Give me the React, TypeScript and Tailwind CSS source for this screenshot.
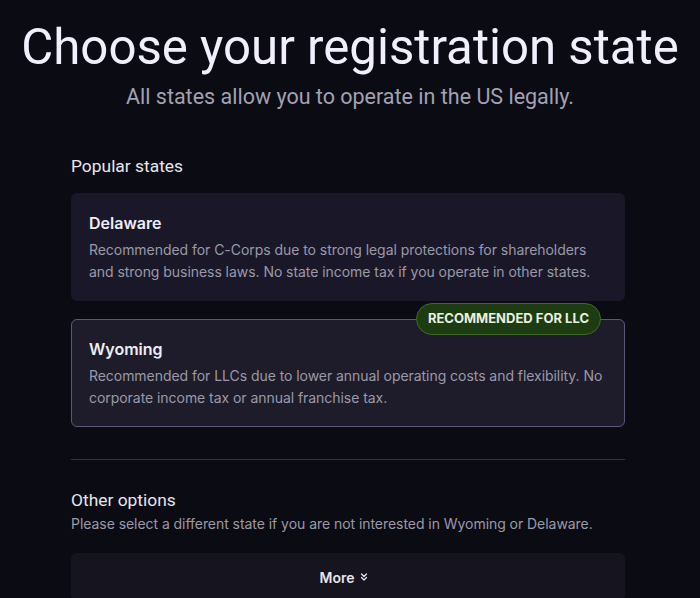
import React from "react";
import { ChevronsDown } from "lucide-react";

export default function App() {
  return (
    <div className="min-h-[598px] w-full bg-[#0b0b14] text-white" style={{ fontFamily: "Inter, 'Noto Sans', sans-serif" }}>
      <div className="flex flex-col items-center pt-[19px]">
        <h1 className="text-[49.2px] leading-[56px] font-normal text-[#f1effc]" style={{ fontFamily: "Roboto, 'Liberation Sans', sans-serif" }}>
          Choose your registration state
        </h1>
        <p className="mt-[8px] text-[21.5px] leading-[28px] text-[#a3a1b3]" style={{ fontFamily: "Roboto, 'Liberation Sans', sans-serif" }}>
          All states allow you to operate in the US legally.
        </p>
      </div>
      <div className="pr-[4px]">
        <div className="mx-auto w-[554px] pt-[42px]">
          <h2 className="text-[17.4px] leading-[26px] text-[#e6e5ee]" style={{ fontFamily: "Roboto, 'Liberation Sans', sans-serif" }}>Popular states</h2>
          <div className="mt-[14px] flex flex-col gap-[18px]">
            <div className="rounded-md bg-[#1a1828] py-[18px] pl-[18px] pr-[14px]">
              <div className="text-[16px] leading-[24px] font-semibold text-[#eeedf5]">Delaware</div>
              <p className="mt-[4px] text-[14px] leading-[22px] tracking-[-0.05px] text-[#9b99a9]">
                Recommended for C-Corps due to strong legal protections for shareholders and strong business laws. No state income tax if you operate in other states.
              </p>
            </div>
            <div className="relative rounded-md border border-[#5c5778] bg-[#1e1c2a] py-[17px] pl-[17px] pr-[13px]">
              <span className="absolute right-[23px] top-[-17px] flex h-[32px] items-center rounded-full border border-[#3d6a24] bg-[#1e3c12] px-[11px] text-[13px] font-bold text-[#e9f0e0]">
                RECOMMENDED FOR LLC
              </span>
              <div className="text-[16px] leading-[24px] font-semibold text-[#eeedf5]">Wyoming</div>
              <p className="mt-[4px] text-[14px] leading-[22px] tracking-[-0.05px] text-[#9b99a9]">
                Recommended for LLCs due to lower annual operating costs and flexibility. No corporate income tax or annual franchise tax.
              </p>
            </div>
          </div>
          <div className="mt-[32px] h-px bg-[#34333e]" />
          <h2 className="mt-[27px] text-[17.4px] leading-[26px] text-[#e6e5ee]" style={{ fontFamily: "Roboto, 'Liberation Sans', sans-serif" }}>Other options</h2>
          <p className="text-[14px] leading-[22px] tracking-[-0.05px] text-[#9b99a9]">
            Please select a different state if you are not interested in Wyoming or Delaware.
          </p>
          <button className="mt-[18px] flex h-[48px] w-full items-center justify-center rounded-md bg-[#15141f] text-[14px] font-semibold text-[#e6e5ee]">
            <span className="flex items-center gap-[4px] pr-[6px]">
              More
              <ChevronsDown size={12} strokeWidth={2.5} />
            </span>
          </button>
        </div>
      </div>
    </div>
  );
}
